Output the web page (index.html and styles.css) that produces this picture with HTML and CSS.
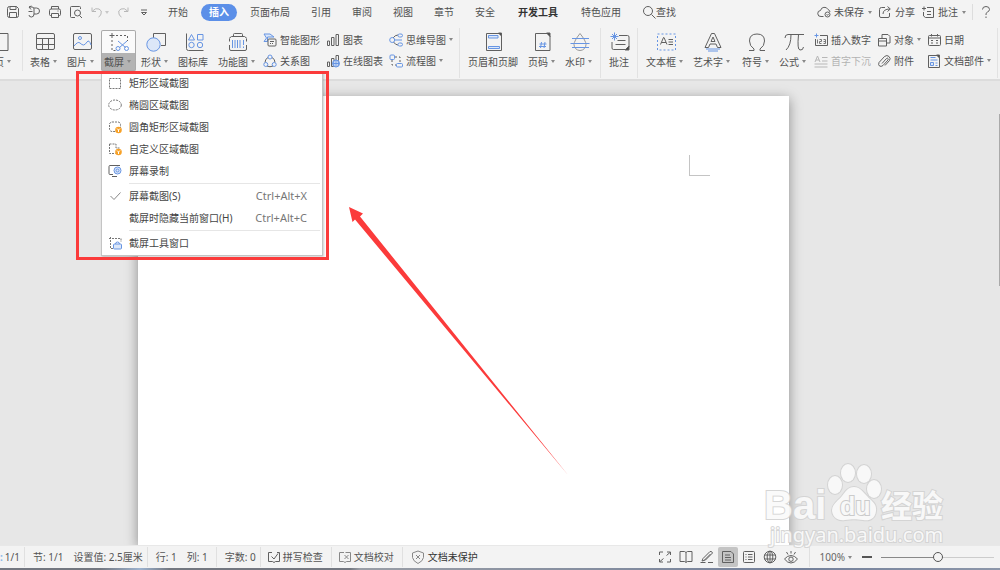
FILE: index.html
```html
<!DOCTYPE html>
<html lang="zh-CN">
<head>
<meta charset="utf-8">
<title>文档</title>
<link rel="stylesheet" href="styles.css">
</head>
<body>
<header class="topbar">
  <div class="quick">
    <button aria-label="保存"><svg class="i14" viewBox="0 0 14 14"><path d="M1.500 3.500a2 2 0 0 1 2-2h7l2 2v7a2 2 0 0 1-2 2h-7a2 2 0 0 1-2-2zM4 1.500v3h6v-3M3.500 12.500v-5h7v5"/></svg></button>
    <button aria-label="导出"><svg class="i14" viewBox="0 0 14 14"><path d="M2 2h3q2 0 2 2v5q0 3-2.500 3T2 10M4 4.500 2 2l2.500-1M5.500 6.500H1.500M7 3h2.500a2.500 2.500 0 0 1 0 6H7"/></svg></button>
    <button aria-label="打印"><svg class="i14" viewBox="0 0 14 14"><path d="M3.500 4V1.500h7V4M3.500 10.500h-1a1 1 0 0 1-1-1V5.500a1.500 1.500 0 0 1 1.500-1.500h8a1.500 1.500 0 0 1 1.500 1.500v4a1 1 0 0 1-1 1h-1M3.500 8.500h7v4h-7zM9.500 6h1"/></svg></button>
    <button aria-label="打印预览"><svg class="i14" viewBox="0 0 14 14"><path d="M6 12.500H2.500a1 1 0 0 1-1-1v-9a1 1 0 0 1 1-1h8a1 1 0 0 1 1 1V4M10.500 10.500l2.500 2.500"/><circle cx="8.500" cy="8" r="3"/></svg></button>
    <button class="faded undo" aria-label="撤销"><svg class="i14" viewBox="0 0 14 14"><path d="M2 2.500v4h4M2.500 6q3-3.500 6.500-2t2 5q-.5 2-2.500 3"/></svg><i class="caret"></i></button>
    <button class="faded" aria-label="恢复"><svg class="i14" viewBox="0 0 14 14"><path d="M12 2.500v4H8M11.500 6q-3-3.500-6.500-2t-2 5q.5 2 2.500 3"/></svg></button>
    <button class="more" aria-label="更多"><svg class="i14" viewBox="0 0 14 14"><path d="M4 5h6M4.500 7.500h5L7 10z"/></svg></button>
  </div>
  <nav class="tabs">
    <button>开始</button><button class="active">插入</button><button>页面布局</button><button>引用</button><button>审阅</button><button>视图</button><button>章节</button><button>安全</button>
  </nav>
  <nav class="tabs extra">
    <button class="strong">开发工具</button><button>特色应用</button>
  </nav>
  <button class="search"><svg class="i14" viewBox="0 0 14 14"><circle cx="6" cy="6" r="4.500"/><path d="m9.500 9.500 4 4"/></svg>查找</button>
  <div class="account">
    <button><svg class="i14" viewBox="0 0 14 14"><path d="M6.500 11.500H4a3 3 0 0 1-.5-6 4 4 0 0 1 7.500-1 3 3 0 0 1 2 2.500"/><circle cx="10.500" cy="9.500" r="2.500"/><path d="m9.500 9.500 1 .8 1-1.300"/></svg>未保存<i class="caret"></i></button>
    <button><svg class="i14" viewBox="0 0 14 14"><path d="M7 2.500H3.500a2 2 0 0 0-2 2V11a1.500 1.500 0 0 0 1.500 1.500h7a1.500 1.500 0 0 0 1.500-1.500V8M5 9q0-5 7-5M9.500 1.500 12.300 4 9.500 6.500"/></svg>分享</button>
    <button><svg class="i14" viewBox="0 0 14 14"><path d="M6 2.500h6.500v10H4.500L2.500 11V7M1 3.500h4M3 1.500v4M6 6.500h4M6 9.500h4"/></svg>批注<i class="caret"></i></button>
    <i class="vline"></i>
    <button aria-label="帮助"><svg class="i14" viewBox="0 0 14 14"><path d="M3.500 4.500q0-3 3.500-3t3.500 3Q10.500 6 8.500 7T7 10M7 11.500v1.500"/></svg></button>
  </div>
</header>

<section class="ribbon">
  <div class="group first">
    <button class="big"><svg class="i20" viewBox="0 0 20 20"><path d="M3 1.500h16v17H3z"/></svg><span>分页<i class="caret"></i></span></button>
  </div>
  <div class="group">
    <button class="big"><svg class="i20" viewBox="0 0 20 20"><rect x="1.500" y="1.500" width="18" height="16" rx="1.500"/><path d="M1.500 6.500h18M1.500 12.500h18M7.500 6.500v11M13.500 6.500v11"/></svg><span>表格<i class="caret"></i></span></button>
    <button class="big"><svg class="i20" viewBox="0 0 20 20"><rect x="1.500" y="1.500" width="18" height="16" rx="1.500"/><g class="blue"><circle cx="8" cy="6" r="1.500"/><path d="M2 14q4-5 6-3t3.500 2T15 10t4 3"/></g></svg><span>图片<i class="caret"></i></span></button>
    <div class="holder">
      <button class="big pressed" aria-expanded="true"><svg class="i20" viewBox="0 0 20 20"><path d="M3 1v5M.5 3.500h5"/><path class="dash" d="M7 3.500h11.500V9M3 8v10.500h5"/><g class="blue"><path d="m9 9 7.500 6.500M18 9l-7.500 6.500"/><circle cx="9" cy="16.500" r="2"/><circle cx="17.500" cy="16.500" r="2"/></g></svg><span>截屏<i class="caret"></i></span></button>
      <div class="menu" role="menu">
        <button role="menuitem"><svg class="i14" viewBox="0 0 14 14"><rect class="dots" x="1.500" y="2.500" width="11" height="10"/></svg>矩形区域截图</button>
        <button role="menuitem"><svg class="i14" viewBox="0 0 14 14"><ellipse class="dots" cx="7" cy="7" rx="6.300" ry="5"/></svg>椭圆区域截图</button>
        <button role="menuitem"><svg class="i14" viewBox="0 0 14 14"><rect class="dots" x="1.500" y="2" width="11" height="9.500" rx="2.500"/><circle class="gold" cx="10.500" cy="10" r="3.300"/><path class="tick" d="m9 8.500 1.500 1.500L12 8.500m-1.500 1.500V12"/></svg>圆角矩形区域截图</button>
        <button role="menuitem"><svg class="i14" viewBox="0 0 14 14"><path class="dots" d="M1.500 2H8v4h4.500M1.500 2v9.500h6"/><circle class="gold" cx="10.500" cy="10" r="3.300"/><path class="tick" d="m9 8.500 1.500 1.500L12 8.500m-1.500 1.500V12"/></svg>自定义区域截图</button>
        <button role="menuitem"><svg class="i14" viewBox="0 0 14 14"><path d="M5 10.500H2a1 1 0 0 1-1-1v-7a1 1 0 0 1 1-1h10M4 12.500h5"/><g class="blue"><circle class="tint" cx="9.500" cy="6.500" r="3.500"/><circle cx="9.500" cy="6.500" r="1.500"/></g></svg>屏幕录制</button>
        <hr>
        <button role="menuitem"><svg class="i14 softline" viewBox="0 0 14 14"><path d="m2.500 7 3.500 3.500 6.500-7"/></svg>屏幕截图(S)<kbd>Ctrl+Alt+X</kbd></button>
        <button role="menuitem"><svg class="i14" viewBox="0 0 14 14"></svg>截屏时隐藏当前窗口(H)<kbd>Ctrl+Alt+C</kbd></button>
        <hr>
        <button role="menuitem"><svg class="i14" viewBox="0 0 14 14"><path class="dots" d="M1 2.500h12V6M2.500 1v11.500H5"/><g class="blue"><rect class="tint" x="5.500" y="8" width="8" height="5" rx="1"/><path d="M7.500 8q0-2 2-2t2 2"/></g></svg>截屏工具窗口</button>
      </div>
    </div>
    <button class="big"><svg class="i20" viewBox="0 0 20 20"><path d="M7.500 7V1.500h12v12H15"/><circle class="blue tint" cx="7.500" cy="12.500" r="6.700"/></svg><span>形状<i class="caret"></i></span></button>
    <button class="big"><svg class="i20" viewBox="0 0 20 20"><path d="M2.500 1.500v15a2 2 0 0 0 2 2h15"/><g class="blue"><path d="m7.500 2.500 3 5.500h-6zM13.500 2.500H19V8h-5.500z"/><circle cx="7.500" cy="13" r="2.700"/><circle cx="16" cy="13" r="2.700"/></g></svg><span>图标库</span></button>
    <button class="big"><svg class="i20" viewBox="0 0 20 20"><path d="M1 6.500 3.500 4.500h13L19 6.500M5.500 4.500V2.500q0-1 1-1h7q1 0 1 1v2M1.500 9.500v-2.500M18.500 9.500v-2.500M1.500 13v4q0 1.500 1.500 1.500h14q1.500 0 1.500-1.500v-4"/><path class="blue" d="M4.500 8v8M7 8v8M9.500 8v8M12 8v8M15.500 8v5M15.500 14.500V16"/></svg><span>功能图<i class="caret"></i></span></button>
  </div>
  <div class="group columns">
    <div class="col">
      <button><svg class="i14" viewBox="0 0 14 14"><path class="blue tint" d="M1 1h6l4 3H4.500v4.500H1L3.500 5z"/><rect class="paper" x="5" y="6" width="8" height="7" rx="1"/><path d="M7 8.500h4M7 10.500h1m1 0h1"/></svg>智能图形</button>
      <button><svg class="i14" viewBox="0 0 14 14"><path d="M5 3.500Q2 5 2 8.500M9 3.500Q12 5 12 8.500M4 12q3 1.500 6 0"/><g class="blue"><circle cx="7" cy="3" r="2"/><circle cx="2.800" cy="10.500" r="2"/><circle cx="11.200" cy="10.500" r="2"/></g></svg>关系图</button>
    </div>
    <div class="col">
      <button><svg class="i14" viewBox="0 0 14 14"><path d="M1.500 8h2v4.500h-2zM5.500 4.500H8v8H5.500zM10 1.500h2.500v11H10z"/></svg>图表</button>
      <button><svg class="i14" viewBox="0 0 14 14"><path d="M1.500 8h2v4.500h-2zM5.500 4.500H8v8H5.500zM10 1.500h2.500v5H10z"/><g class="blue"><circle class="tint" cx="10" cy="9.500" r="3.500"/><path d="M6.500 9.500h7M10 6v7M8 7q-1 2.500 0 5M12 7q1 2.500 0 5"/></g></svg>在线图表</button>
    </div>
    <div class="col">
      <button><svg class="i14" viewBox="0 0 14 14"><path d="M4 5q2-3 5-3M4.500 9q2 3 4.500 3"/><g class="blue"><circle cx="3.200" cy="7" r="2.500"/><rect x="9" y="1" width="4.500" height="3" rx="1.500"/><rect x="9" y="10" width="4.500" height="3" rx="1.500"/><path d="M6 7h7"/></g></svg>思维导图<i class="caret"></i></button>
      <button><svg class="i14" viewBox="0 0 14 14"><path class="dash" d="M6 3h5v6M3 6v5h4"/><g class="blue"><rect x="1" y="1" width="4.500" height="4.500" rx="1"/><rect x="7.500" y="9.500" width="6" height="3.500" rx="1"/></g></svg>流程图<i class="caret"></i></button>
    </div>
  </div>
  <i class="rule"></i>
  <div class="group">
    <button class="big"><svg class="i20" viewBox="0 0 20 20"><path d="M2.500 1.500h13l2 2v15h-15z"/><path class="ink" d="M14.500 1h3v3z"/><path class="blue tint" d="M4.500 3.500H14v2.500H4.500zM4.500 14.500h11v2h-11z"/></svg><span>页眉和页脚</span></button>
    <button class="big"><svg class="i20" viewBox="0 0 20 20"><path d="M2.500 1.500h12l2.500 2.500v14.500H2.500z"/><path class="ink" d="M13.500 1h3.500v3.500z"/><path class="blue" d="M8.500 10 7.500 16M12 10l-1 6M6.500 12h7M6 14.500h7"/></svg><span>页码<i class="caret"></i></span></button>
    <button class="big"><svg class="i20" viewBox="0 0 20 20"><path class="soft" d="M10 1.500q-6 7.500-6 11a6 6 0 0 0 12 0q0-3.500-6-11z"/><path class="blue" d="M2 6.500h17M.5 11.500h19M2 15.500h17"/></svg><span>水印<i class="caret"></i></span></button>
  </div>
  <i class="rule"></i>
  <div class="group">
    <button class="big"><svg class="i20" viewBox="0 0 20 20"><path d="M9 3.500h8.500q1.500 0 1.500 1.500v9.500L16 17.500H3.500q-1.500 0-1.500-1.500V10M7.500 8.500h8M5.500 12.500h10"/><path class="ink" d="M19 14v4h-4z"/><path class="blue" d="M4.500.5v8M.5 4.500h8M2 2l5 5M7 2 2 7"/></svg><span>批注</span></button>
  </div>
  <i class="rule"></i>
  <div class="group">
    <button class="big"><svg class="i20" viewBox="0 0 20 20"><rect class="blue dash" x="1.500" y="2" width="18" height="16"/><path d="m4.500 12.500 3-7h.500l3 7M5.500 10.500h4.500M12.500 7.500H17M12.500 10H17M12.500 12.500H17"/></svg><span>文本框<i class="caret"></i></span></button>
    <button class="big"><svg class="i20" viewBox="0 0 20 20"><path d="m2 15.500 6.500-14h3l6.500 14h-3.500L13 12H7l-1.500 3.500zM8 9.500h4L10 5z"/><path class="blue" d="M3 17h14M5 19h10"/></svg><span>艺术字<i class="caret"></i></span></button>
  </div>
  <div class="group spaced">
    <button class="big"><svg class="i20" viewBox="0 0 20 20"><path d="M2 18.500h5V17q-4.500-3-4.500-8 0-7 7.500-7t7.500 7q0 5-4.500 8v1.500h5"/></svg><span>符号<i class="caret"></i></span></button>
    <button class="big"><svg class="i20" viewBox="0 0 20 20"><path d="M1 6q0-3.500 3-3.500h16M7 2.500q0 11-5 15.500M14.500 2.500Q13 18 16 18q3 .5 3.500-3"/></svg><span>公式<i class="caret"></i></span></button>
  </div>
  <div class="group columns">
    <div class="col">
      <button><svg class="i14" viewBox="0 0 14 14"><path d="M6 2.500h7.500v10h-12V6"/><path class="thin" d="M3.500 6.500v4M5.500 6.500h2v2h-2v2h2M9.500 6.500h2v4h-2M9.500 8.500h2"/><path class="blue" d="M2.500.5v4M.5 2.500h4"/></svg>插入数字</button>
      <button class="faded"><svg class="i14" viewBox="0 0 14 14"><path d="m1 8 2.500-6L6 8M2 6h3M8 3.500h5.500M8 7h5.500M.5 10h13M.5 13h13"/></svg>首字下沉</button>
    </div>
    <div class="col">
      <button><svg class="i14" viewBox="0 0 14 14"><path d="M5 5V1.500h6l2 2V10H9.500M1.500 5.500h8v7.500h-8zM1.500 8h8"/></svg>对象<i class="caret"></i></button>
      <button><svg class="i14" viewBox="0 0 14 14"><path d="m5 9.500 4.500-5q1-.8 1.500 0t0 1.500L6 11.500q-2 1.500-3.500.5t-.5-3.500L7.500 2.500q2.500-2 4.500 0t.500 4L8 11.500"/></svg>附件</button>
    </div>
    <div class="col">
      <button><svg class="i14" viewBox="0 0 14 14"><rect x="1.500" y="2.500" width="12" height="10" rx="1"/><path d="M1.500 5h12M4.500 1v2.500M10.500 1v2.500M4 7.500h2M9 7.500h2M4 10h2M9 10h2"/></svg>日期</button>
      <button><svg class="i14" viewBox="0 0 14 14"><path d="M1.500 1.500h9l2 2v10h-11z"/><path class="ink" d="M9.500 1h3v3z"/><path class="blue tint" d="M3.500 3.500h5M3.500 6h7M3.500 8.500h3v3h-3zM8.500 9h2M8.500 11.500h2"/></svg>文档部件<i class="caret"></i></button>
    </div>
  </div>
  <i class="rule"></i>
</section>

<main class="desk">
  <article class="sheet"><i class="corner"></i></article>
  <i class="scroll"></i>
</main>

<footer class="status">
  <div class="cell lead"><b>:</b><span>1/1</span></div>
  <div class="cell"><span>节: 1/1</span><span>设置值: 2.5厘米</span></div>
  <div class="cell wide"><span>行: 1</span><span>列: 1</span></div>
  <div class="cell"><span>字数: 0</span></div>
  <button class="cell"><svg class="i14" viewBox="0 0 14 14"><path d="M5 2.500H1.500v9h4l1.500 1 1.500-1h4v-9H10M4.500 6.500 7 9l4-5.500"/></svg>拼写检查</button>
  <button class="cell"><svg class="i14 softline" viewBox="0 0 14 14"><path d="M6 2.500H1.500v9h4l1.500 1 1.500-1h4v-9H7.500M6.500 5l4 4M10.500 5l-4 4"/></svg>文档校对</button>
  <button class="cell protect"><svg class="i14 softline" viewBox="0 0 14 14"><path d="m7 1 5.500 2v4.500Q12 11 7 13.500 2 11 1.500 7.500V3zM5 5l4 4M9 5 5 9"/></svg>文档未保护</button>
  <div class="views">
    <button aria-label="全屏"><svg class="i14" viewBox="0 0 14 14"><path d="M1.500 5V2H5M9 2h3.500v3M12.500 9v3H9M5 12H1.500V9M8.500 5.500 12 2.500M5.500 8.500 2 11.500"/></svg></button>
    <button aria-label="阅读"><svg class="i14" viewBox="0 0 14 14"><path d="M7 2.500V12M1 1.500h4.500L7 2.500l1.500-1H13v10H8.500L7 12.500l-1.500-1H1z"/></svg></button>
    <button aria-label="编辑"><svg class="i14" viewBox="0 0 14 14"><path d="m3 8.500 7-7q2-.5 2.500 1.500l-7 7-3.500 1zM4.500 10l6-6M.5 12.500h5M8 12.500h5"/></svg></button>
    <button class="on" aria-label="页面视图"><svg class="i14" viewBox="0 0 14 14"><path d="M1.500 1.500H10l2.500 2.500v8.500h-11zM4 5h5M4 7.500h6M4 10h6"/></svg></button>
    <button aria-label="大纲"><svg class="i14" viewBox="0 0 14 14"><rect x="1.500" y="1.500" width="11" height="11" rx="1"/><path d="M3.500 4.500h1M6 4.500h4.500M3.500 7h1M6 7h4.500M3.500 9.500h1M6 9.500h4.500"/></svg></button>
    <button aria-label="网页"><svg class="i14" viewBox="0 0 14 14"><circle cx="7" cy="7" r="5.800"/><ellipse cx="7" cy="7" rx="2.800" ry="5.800"/><path d="M7 1v12M1.500 5h11M1.500 9h11"/></svg></button>
    <button aria-label="护眼"><svg class="i14" viewBox="0 0 14 14"><path d="M.5 9Q3.500 5.500 7 5.500T13.500 9Q10.500 13 7 13T.500 9M7 1v2.500M2.500 2 4 4.500M11.500 2 10 4.500"/><circle cx="7" cy="9.200" r="2.200"/></svg></button>
  </div>
  <div class="zoom">
    <button>100%<i class="caret"></i></button>
    <button class="minus" aria-label="缩小"></button>
    <input type="range" min="0" max="100" value="50" aria-label="缩放">
  </div>
</footer>
<div class="taskbar"></div>

<svg class="watermark" viewBox="0 0 190 90" aria-label="Baidu 经验">
  <text class="logo" x="1" y="59">Bai</text>
  <ellipse cx="72" cy="25" rx="7" ry="9"/><ellipse cx="85" cy="13" rx="7" ry="9"/><ellipse cx="101" cy="14" rx="7" ry="9"/><ellipse cx="111" cy="29" rx="7" ry="9"/>
  <path d="M91 27c6 0 9 5 13 9 4 5 10 7 9 15-1 9-8 10-13 9-7-1-11-1-18 0-5 1-12-1-13-9 0-7 6-10 10-15 3-4 6-9 12-9z"/>
  <text class="du" x="77" y="55">du</text>
  <text class="cn" x="118" y="57">经验</text>
  <text class="url" x="7" y="82">jingyan.baidu.com</text>
</svg>
<div class="frame"></div>
<svg class="arrow" viewBox="0 0 222 270"><path d="M1 0 15 6.500 12 9.500 220 268 7 12.500 4.500 15z"/></svg>
</body>
</html>
```
FILE: styles.css
```css
* { box-sizing: border-box; }
html, body { height: 100%; }
body {
  margin: 0;
  display: flex;
  flex-direction: column;
  position: relative;
  overflow: hidden;
  background: #f3f3f3;
  color: #505050;
  font: 10px/18px "Noto Sans", "Noto Sans CJK SC", sans-serif;
}
button {
  margin: 0;
  padding: 0;
  border: 0;
  background: none;
  color: inherit;
  font: inherit;
  white-space: nowrap;
  display: flex;
  align-items: center;
  flex: none;
}
svg { flex: none; fill: none; stroke: #606060; stroke-width: 1; }
.i14 { width: 14px; height: 14px; }
.i20 { width: 20px; height: 20px; }
.blue, .blue * { stroke: #6795e3; }
.tint { fill: #dce7f8; }
.paper { fill: #f3f3f3; }
.ink { fill: #444; }
.soft { stroke: #999; }
.thin { stroke: #777; }
.dash { stroke-dasharray: 2 2; }
.dots { stroke: #777; stroke-dasharray: 2 1; }
.gold { fill: #f7a127; stroke: none; }
.tick { stroke: #fff; }
.softline { stroke: #888; }
.caret {
  flex: none;
  margin-left: 3px;
  border: 2px solid transparent;
  border-top: 3px solid #888;
  border-bottom: 0;
}
.faded { opacity: .4; }

.topbar { flex: none; height: 24px; display: flex; align-items: center; }
.quick { display: flex; gap: 7px; padding-left: 6px; width: 160px; }
.quick .undo { width: 19px; }
.quick .undo .caret { margin-left: 1px; }
.tabs { display: flex; gap: 5px; }
.tabs button { padding: 0 8px; height: 17px; border-radius: 9px; }
.tabs .active { background: #5b8fe8; color: #fff; font-weight: 600; }
.tabs.extra { gap: 7px; margin: 0 13px 0 7px; }
.tabs .strong { font-weight: 600; color: #333; }
.account { margin-left: auto; display: flex; align-items: center; gap: 6px; padding-right: 7px; }
.account button { gap: 3px; }
.account .caret { margin-left: 1px; }
.vline { width: 1px; height: 16px; background: #ddd; }

.ribbon {
  flex: none;
  height: 57px;
  display: flex;
  align-items: flex-start;
  padding-top: 6px;
  border-bottom: 2px solid #dcdcdc;
}
.group { display: flex; gap: 2px; flex: none; }
.first { margin: 0 11px 0 -19px; box-shadow: 6px 0 0 #f3f3f3, 7px 0 0 #e2e2e2; }
.spaced { margin: 0 3px 0 4px; }
.big { flex-direction: column; height: 41px; padding-top: 2px; border-radius: 2px; }
.big span { display: flex; align-items: center; height: 19px; padding: 0 5px 0 3px; }
.holder { position: relative; }
.pressed { box-shadow: inset 0 0 0 1px #aaa; background: linear-gradient(#fafafa 23px, #b3b3b3 23px); }
.columns { gap: 6px; margin: -1px 0 0 3px; padding-right: 3px; }
.spaced + .columns { margin-left: 0; }
.col button { height: 21px; gap: 3px; }
.col .caret { margin-left: 0; }
.rule { flex: none; width: 1px; height: 50px; margin: -2px 5px 0 3px; background: #e2e2e2; }

.menu {
  position: absolute;
  z-index: 3;
  top: 42px;
  left: 0;
  width: 222px;
  padding-bottom: 1px;
  background: #fff;
  border: solid #c4c4c4;
  border-width: 0 1px 1px;
  box-shadow: 1px 1px 2px #0003;
  color: #444;
}
.menu button { width: 100%; height: 22px; padding: 0 15px 0 6px; gap: 7px; }
.menu hr { margin: 1px 2px 1px 27px; border: 0; height: 1px; background: #e6e6e6; }
.menu kbd { margin-left: auto; font: inherit; font-size: 11px; color: #777; }

.desk {
  flex: 1;
  min-height: 0;
  position: relative;
  background: #e7e7e7;
  padding: 15px 21.1% 0 13.8%;
  overflow: hidden;
}
.sheet {
  height: 100%;
  background: #fff;
  box-shadow: 0 3px 12px #0006;
  display: flex;
  justify-content: flex-end;
  padding: 59px 79px 0 0;
}
.corner { width: 21px; height: 21px; border: solid #c4c4c4; border-width: 0 0 1px 1px; }
.scroll { position: absolute; right: 0; top: 33px; width: 1px; height: 172px; background: #aaa; }
.watermark {
  position: absolute;
  z-index: 2;
  right: 47px;
  bottom: 20px;
  width: 190px;
  height: 90px;
  fill: #fafafa;
  stroke: #d2d2d2;
  stroke-width: 2;
  paint-order: stroke;
  opacity: .9;
  pointer-events: none;
}
.logo { font: bold 40px "Liberation Sans", sans-serif; }
.du { font: bold 25px "Liberation Sans", sans-serif; stroke: #c8c8c8; }
.cn { font: bold 31px "Noto Sans CJK SC", sans-serif; }
.url { font: 20px "Noto Sans", sans-serif; }

.status { flex: none; height: 23px; display: flex; align-items: center; border-top: 1px solid #e8e8e8; color: #555; }
.cell { display: flex; align-items: center; height: 20px; padding: 0 4px 0 8px; border-right: 1px solid #e0e0e0; flex: none; }
.cell span + span { margin-left: 10px; }
.cell.wide { padding-right: 8px; }
.cell.lead { padding: 0 4px 0 0; }
.lead b { color: #8ab8e8; margin-right: 2px; }
button.cell { gap: 2px; padding: 0 8px 0 6px; }
button.protect { border: 0; color: #333; gap: 3px; padding-left: 8px; }
.views { margin-left: auto; display: flex; gap: 1px; padding-right: 8px; border-right: 1px solid #e0e0e0; }
.views button { width: 20px; height: 20px; justify-content: center; border-radius: 2px; }
.views .on { background: #c4c4c4; }
.zoom { display: flex; align-items: center; padding: 0 6px 0 10px; color: #666; }
.minus { width: 10px; height: 2px; margin: 0 9px 0 10px; background: #555; }
input[type="range"] { appearance: none; width: 113px; height: 12px; margin: 0; background: linear-gradient(#888, #888) left / 50% 1px no-repeat, linear-gradient(#ccc, #ccc) left / 100% 1px no-repeat; }
input[type="range"]::-webkit-slider-thumb { appearance: none; width: 10px; height: 10px; border: 1px solid #555; border-radius: 50%; background: #f3f3f3; }
.taskbar { flex: none; height: 2px; background: linear-gradient(90deg, #737780 10%, #9db3cf 14%, #737780 17%, #737780 35%, #9a9ea6 36%, #73809a 80%, #8d97aa); }

.frame { position: absolute; z-index: 4; left: 76px; top: 71px; width: 253px; height: 189px; border: 3px solid #fb3b3b; pointer-events: none; }
.arrow { position: absolute; z-index: 4; left: 348px; top: 207px; width: 222px; height: 270px; fill: #fb3b3b; stroke: none; pointer-events: none; }
```
